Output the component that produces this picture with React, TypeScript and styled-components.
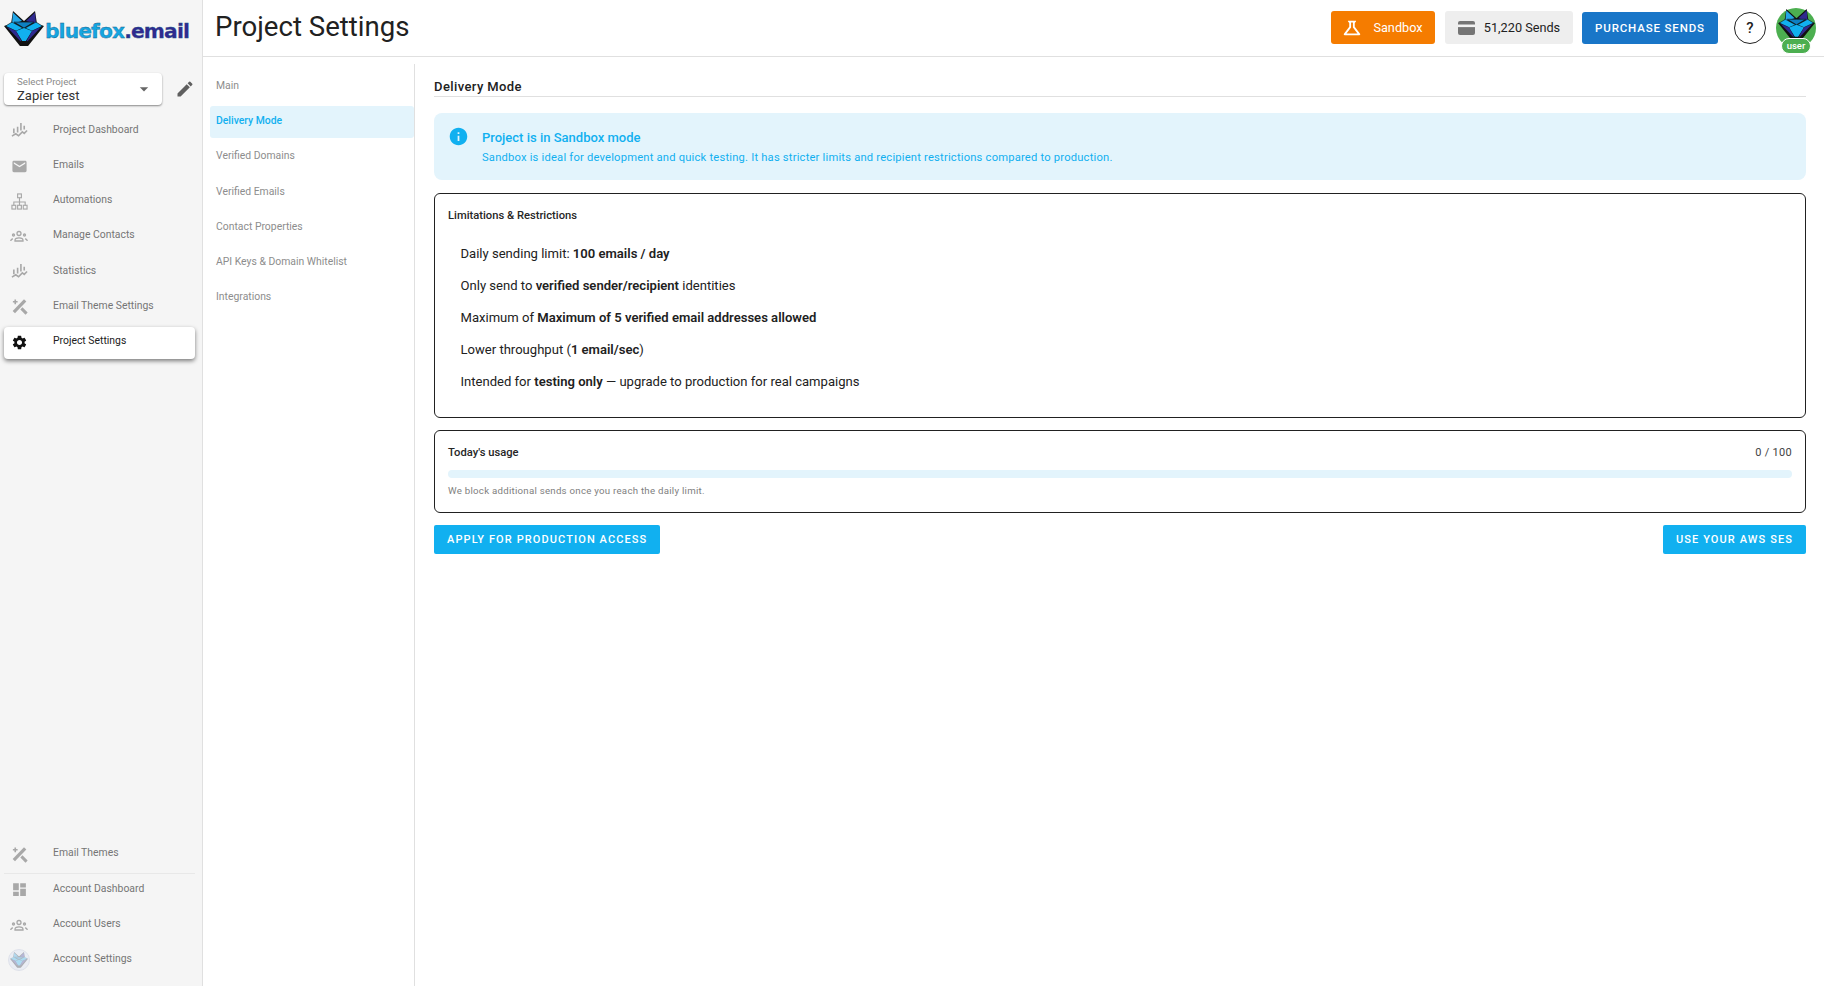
import React from "react";
import styled, { createGlobalStyle } from "styled-components";
import {
  MdArrowDropDown,
  MdDashboard,
  MdEdit,
  MdEmail,
  MdInfo,
  MdOutlineScience,
  MdSettings,
} from "react-icons/md";

const GlobalStyle = createGlobalStyle`
  html, body, #root {
    margin: 0;
    height: 100%;
  }
  body {
    font-family: Roboto, "Liberation Sans", sans-serif;
    color: #212121;
    background: #fff;
    overflow: hidden;
  }
  * {
    box-sizing: border-box;
  }
`;

const Shell = styled.div`
  display: grid;
  grid-template-columns: 203px 1fr;
  height: 986px;
`;

const Sidebar = styled.aside`
  display: flex;
  flex-direction: column;
  background: #f5f5f5;
  border-right: 1px solid #e0e0e0;
  padding: 0 7px 0 4px;
`;

const Logo = styled.div`
  display: flex;
  align-items: center;
  height: 57px;
  gap: 1px;
`;

const LogoText = styled.span`
  font-family: "DejaVu Sans", sans-serif;
  font-weight: 700;
  font-size: 20.3px;
  letter-spacing: -0.9px;
  color: #15a5e0;
  -webkit-text-stroke: 0.3px #1c5a85;
  margin-top: 4px;
  white-space: nowrap;

  b {
    color: #2f2a8f;
  }
`;

const ProjectRow = styled.div`
  display: flex;
  align-items: center;
  margin-top: 16px;
  margin-bottom: 10.4px;
`;

const SelectBox = styled.div`
  position: relative;
  width: 159px;
  height: 32px;
  background: #fff;
  border-radius: 4px;
  box-shadow: 0 1px 2px rgba(0, 0, 0, 0.45);
  padding: 4px 0 0 13px;
`;

const SelectLabel = styled.div`
  font-size: 9.7px;
  line-height: 10px;
  color: #8a8a8a;
`;

const SelectValue = styled.div`
  font-size: 13px;
  line-height: 17px;
  letter-spacing: 0.05px;
  color: #333;
`;

const SelectCaret = styled.span`
  position: absolute;
  right: 8px;
  top: 6px;
  color: #666;
  font-size: 20px;
  line-height: 0;

  svg {
    display: block;
  }
`;

const PencilSlot = styled.span`
  display: flex;
  margin-left: 13px;
  color: #5f5f5f;
  font-size: 20px;
`;

const NavRow = styled.div<{ $active?: boolean }>`
  display: flex;
  align-items: center;
  height: 32px;
  margin-bottom: 3.2px;
  border-radius: 4px;
  font-size: 10.4px;
  color: ${(p) => (p.$active ? "#212121" : "#757575")};
  background: ${(p) => (p.$active ? "#fff" : "transparent")};
  box-shadow: ${(p) => (p.$active ? "0 2px 4px rgba(0,0,0,.5)" : "none")};
  padding-bottom: 4px;
`;

const NavIcon = styled.span<{ $active?: boolean }>`
  display: flex;
  align-items: center;
  justify-content: center;
  width: 30px;
  margin-right: 19px;
  margin-top: 3px;
  font-size: 17px;
  color: ${(p) => (p.$active ? "#111" : "#a8a8a8")};
`;

const BottomGroup = styled.div`
  margin-top: auto;
  padding-bottom: 6.4px;
`;

const Divider = styled.div`
  height: 1px;
  background: #e8e8e8;
  margin: -1px 0 0;
`;

const RightPane = styled.div`
  display: flex;
  flex-direction: column;
  min-width: 0;
`;

const Header = styled.header`
  display: flex;
  align-items: center;
  height: 57px;
  padding: 0 8px 1px 12px;
  border-bottom: 1px solid #e0e0e0;
`;

const PageTitle = styled.h1`
  margin: 0 auto 2px 0;
  font-size: 27.6px;
  font-weight: 400;
  color: #212121;
`;

const HeaderChip = styled.div<{ $bg: string; $fg: string }>`
  display: flex;
  align-items: center;
  justify-content: center;
  height: 33px;
  margin-right: 10px;
  border-radius: 3px;
  font-size: 12.7px;
  background: ${(p) => p.$bg};
  color: ${(p) => p.$fg};
`;

const SandboxChip = styled(HeaderChip)`
  width: 104px;
  gap: 10px;
  padding-right: 2px;

  svg {
    font-size: 22px;
  }
`;

const SendsChip = styled(HeaderChip)`
  width: 128px;
  gap: 9px;
  margin-right: 9px;
`;

const PurchaseChip = styled(HeaderChip)`
  width: 136px;
  height: 32px;
  font-size: 11.5px;
  font-weight: 500;
  letter-spacing: 0.85px;
  margin-right: 16px;
`;

const HelpCircle = styled.div`
  display: flex;
  align-items: center;
  justify-content: center;
  width: 32px;
  height: 32px;
  border: 1px solid #212121;
  border-radius: 50%;
  font-size: 15px;
  font-weight: 500;
  margin-right: 10px;
`;

const Avatar = styled.div`
  position: relative;
  display: flex;
  align-items: center;
  justify-content: center;
  width: 40px;
  height: 40px;
  border-radius: 50%;
  background: #4caf50;
  padding-bottom: 5px;
`;

const AvatarBadge = styled.span`
  position: absolute;
  left: 5px;
  top: 30px;
  width: 30px;
  height: 16px;
  border-radius: 8px;
  border: 1px solid #fff;
  background: #4caf50;
  color: #fff;
  font-size: 9.5px;
  font-weight: 500;
  line-height: 14px;
  text-align: center;
`;

const Body = styled.div`
  display: flex;
  flex: 1;
  min-height: 0;
`;

const SubNav = styled.nav`
  width: 212px;
  margin-top: 7px;
  padding: 7px 0 0 7px;
  border-right: 1px solid #e0e0e0;
`;

const SubNavItem = styled.div<{ $active?: boolean }>`
  display: flex;
  align-items: center;
  height: 32px;
  margin-bottom: 3.2px;
  padding: 0 6px 3px;
  border-radius: 3px;
  font-size: 10.4px;
  color: ${(p) => (p.$active ? "#11b0f0" : "#8d8d8d")};
  font-weight: ${(p) => (p.$active ? 500 : 400)};
  background: ${(p) => (p.$active ? "#e3f4fc" : "transparent")};
`;

const Content = styled.main`
  flex: 1;
  min-width: 0;
  padding: 20px 18px 0 19px;
`;

const SectionTitle = styled.div`
  height: 20px;
  font-size: 13px;
  font-weight: 500;
  letter-spacing: 0.4px;
  line-height: 20px;
  border-bottom: 1px solid #e0e0e0;
  margin-bottom: 16px;
`;

const Alert = styled.div`
  display: flex;
  height: 67px;
  padding: 15px 0 0 14px;
  background: #e3f4fc;
  border-radius: 8px;
  color: #11b0f0;
  margin-bottom: 13px;
`;

const AlertIcon = styled.span`
  display: flex;
  font-size: 21px;
  height: 21px;
  margin: -2px 13px 0 0;
`;

const AlertTitle = styled.div`
  font-size: 13px;
  font-weight: 500;
  line-height: 20px;
`;

const AlertText = styled.div`
  font-size: 11.2px;
  line-height: 20px;
  letter-spacing: 0.2px;
`;

const Card = styled.section<{ $height: number }>`
  height: ${(p) => p.$height}px;
  border: 1px solid #212121;
  border-radius: 6px;
  padding: 13px 13px 0;
  margin-bottom: 12px;
`;

const CardTitle = styled.div`
  font-size: 11.2px;
  font-weight: 500;
  line-height: 18px;
  color: #262626;
`;

const LimitList = styled.div`
  margin-top: 13px;
  padding-left: 12.5px;
`;

const LimitRow = styled.div`
  font-size: 13.07px;
  height: 32px;
  line-height: 32px;
  color: #212121;

  b {
    font-weight: 600;
  }
`;

const UsageTop = styled.div`
  display: flex;
  justify-content: space-between;
  margin-bottom: 8px;
`;

const UsageCount = styled.span`
  font-size: 11px;
  line-height: 18px;
  color: #424242;
  letter-spacing: 0.3px;
`;

const Track = styled.div`
  height: 8px;
  border-radius: 4px;
  background: #e3f4fc;
`;

const Hint = styled.div`
  margin-top: 6px;
  font-size: 9.7px;
  line-height: 14px;
  letter-spacing: 0.25px;
  color: #808080;
`;

const ActionRow = styled.div`
  display: flex;
  justify-content: space-between;
`;

const ActionButton = styled.button`
  height: 29px;
  padding: 0 13px;
  border: 0;
  border-radius: 2px;
  background: #11b0f0;
  color: #fff;
  font-family: Roboto, sans-serif;
  font-size: 11px;
  font-weight: 500;
  letter-spacing: 1.1px;
`;

const FoxIcon = ({ size, faded }: { size: number; faded?: boolean }) => (
  <svg width={size} height={size * 0.88} viewBox="0 0 40 35" opacity={faded ? 0.28 : 1}>
    <polygon points="9,0 20,10 31,0 33,13 40,15 24,35 20,35 16,35 0,15 7,13" fill="#111" />
    <polygon points="9,1.5 18,10 8,13" fill="#22a6e6" />
    <polygon points="31,1.5 22,10 32,13" fill="#2f2a8f" />
    <polygon points="1.5,15 8,11 19,17 12,20" fill="#11b0f0" stroke="#111" strokeWidth="0.6" />
    <polygon points="38.5,15 32,11 21,17 28,20" fill="#11b0f0" stroke="#111" strokeWidth="0.6" />
    <polygon points="10,11 20,11 30,11 20,17" fill="#0d7fc1" stroke="#111" strokeWidth="0.6" />
    <polygon points="12,20 20,17 28,20 20,33" fill="#11b0f0" />
    <polygon points="3,16 12,20 19,33" fill="#2f2a8f" />
    <polygon points="37,16 28,20 21,33" fill="#2f2a8f" />
    <polygon points="16,30 24,30 20,35" fill="#111" />
  </svg>
);

const ChartIcon = () => (
  <svg width="17" height="17" viewBox="0 0 18 18" fill="none" stroke="currentColor" strokeWidth="1.7">
    <path d="M3 7v5M7 5v6M10.5 1v8M14 4v4" />
    <path d="M1 15l4-2.5 3 2 4-4 2 1.5 3-3" />
  </svg>
);

const TreeIcon = () => (
  <svg width="17" height="17" viewBox="0 0 18 18" fill="none" stroke="currentColor" strokeWidth="1.2">
    <rect x="7" y="1" width="4" height="4" />
    <rect x="1" y="13" width="4" height="4" />
    <rect x="7" y="13" width="4" height="4" />
    <rect x="13" y="13" width="4" height="4" />
    <path d="M9 5v8M3 13v-3.5h12V13" />
  </svg>
);

const GroupIcon = () => (
  <svg width="18" height="18" viewBox="0 0 18 18" fill="none" stroke="currentColor" strokeWidth="1.3">
    <circle cx="9" cy="6.5" r="2" />
    <circle cx="3.5" cy="8" r="1" />
    <circle cx="14.5" cy="8" r="1" />
    <path d="M5 14v-.8c0-1.6 2-2.4 4-2.4s4 .8 4 2.4v.8z" />
    <path d="M.8 14c0-1.3.8-2 2.2-2.2M17.2 14c0-1.3-.8-2-2.2-2.2" />
  </svg>
);

const ThemeIcon = () => (
  <svg width="17" height="17" viewBox="0 0 18 18" fill="none" stroke="currentColor">
    <path d="M15 2.5L3 15" strokeWidth="3.4" />
    <path d="M4.5 1.5v5M2 4h5" strokeWidth="1.7" />
    <path d="M11 11l5.5 5.5" strokeWidth="3.2" />
  </svg>
);

const CardIcon = () => (
  <svg width="17" height="14" viewBox="0 0 17 14">
    <rect width="17" height="14" rx="2" fill="#757575" />
    <rect y="3.5" width="17" height="2.6" fill="#f2f2f2" />
  </svg>
);

const SettingsAvatar = styled.span`
  display: flex;
  align-items: center;
  justify-content: center;
  width: 22px;
  height: 22px;
  border-radius: 50%;
  background: #eaedf4;
  border: 1px solid #dfe2ea;
`;

const topItems = [
  { label: "Project Dashboard", icon: <ChartIcon /> },
  { label: "Emails", icon: <MdEmail /> },
  { label: "Automations", icon: <TreeIcon /> },
  { label: "Manage Contacts", icon: <GroupIcon /> },
  { label: "Statistics", icon: <ChartIcon /> },
  { label: "Email Theme Settings", icon: <ThemeIcon /> },
  { label: "Project Settings", icon: <MdSettings />, active: true },
];

const subNavItems = [
  "Main",
  "Delivery Mode",
  "Verified Domains",
  "Verified Emails",
  "Contact Properties",
  "API Keys & Domain Whitelist",
  "Integrations",
];

export default function App() {
  return (
    <>
      <GlobalStyle />
      <Shell>
        <Sidebar>
          <Logo>
            <FoxIcon size={40} />
            <LogoText>
              bluefox<b>.email</b>
            </LogoText>
          </Logo>
          <ProjectRow>
            <SelectBox>
              <SelectLabel>Select Project</SelectLabel>
              <SelectValue>Zapier test</SelectValue>
              <SelectCaret>
                <MdArrowDropDown />
              </SelectCaret>
            </SelectBox>
            <PencilSlot>
              <MdEdit />
            </PencilSlot>
          </ProjectRow>
          {topItems.map((item) => (
            <NavRow key={item.label} $active={item.active}>
              <NavIcon $active={item.active}>{item.icon}</NavIcon>
              {item.label}
            </NavRow>
          ))}
          <BottomGroup>
            <NavRow>
              <NavIcon>
                <ThemeIcon />
              </NavIcon>
              Email Themes
            </NavRow>
            <Divider />
            <NavRow>
              <NavIcon>
                <MdDashboard />
              </NavIcon>
              Account Dashboard
            </NavRow>
            <NavRow>
              <NavIcon>
                <GroupIcon />
              </NavIcon>
              Account Users
            </NavRow>
            <NavRow>
              <NavIcon>
                <SettingsAvatar>
                  <FoxIcon size={18} faded />
                </SettingsAvatar>
              </NavIcon>
              Account Settings
            </NavRow>
          </BottomGroup>
        </Sidebar>
        <RightPane>
          <Header>
            <PageTitle>Project Settings</PageTitle>
            <SandboxChip $bg="#f57c00" $fg="#fff">
              <MdOutlineScience />
              Sandbox
            </SandboxChip>
            <SendsChip $bg="#eeeeee" $fg="#212121">
              <CardIcon />
              51,220 Sends
            </SendsChip>
            <PurchaseChip $bg="#1976c8" $fg="#fff">
              PURCHASE SENDS
            </PurchaseChip>
            <HelpCircle>?</HelpCircle>
            <Avatar>
              <FoxIcon size={37} />
              <AvatarBadge>user</AvatarBadge>
            </Avatar>
          </Header>
          <Body>
            <SubNav>
              {subNavItems.map((label) => (
                <SubNavItem key={label} $active={label === "Delivery Mode"}>
                  {label}
                </SubNavItem>
              ))}
            </SubNav>
            <Content>
              <SectionTitle>Delivery Mode</SectionTitle>
              <Alert>
                <AlertIcon>
                  <MdInfo />
                </AlertIcon>
                <div>
                  <AlertTitle>Project is in Sandbox mode</AlertTitle>
                  <AlertText>
                    Sandbox is ideal for development and quick testing. It has stricter limits and recipient
                    restrictions compared to production.
                  </AlertText>
                </div>
              </Alert>
              <Card $height={225}>
                <CardTitle>Limitations &amp; Restrictions</CardTitle>
                <LimitList>
                  <LimitRow>
                    Daily sending limit: <b>100 emails / day</b>
                  </LimitRow>
                  <LimitRow>
                    Only send to <b>verified sender/recipient</b> identities
                  </LimitRow>
                  <LimitRow>
                    Maximum of <b>Maximum of 5 verified email addresses allowed</b>
                  </LimitRow>
                  <LimitRow>
                    Lower throughput (<b>1 email/sec</b>)
                  </LimitRow>
                  <LimitRow>
                    Intended for <b>testing only</b> — upgrade to production for real campaigns
                  </LimitRow>
                </LimitList>
              </Card>
              <Card $height={83}>
                <UsageTop>
                  <CardTitle>Today's usage</CardTitle>
                  <UsageCount>0 / 100</UsageCount>
                </UsageTop>
                <Track />
                <Hint>We block additional sends once you reach the daily limit.</Hint>
              </Card>
              <ActionRow>
                <ActionButton>APPLY FOR PRODUCTION ACCESS</ActionButton>
                <ActionButton>USE YOUR AWS SES</ActionButton>
              </ActionRow>
            </Content>
          </Body>
        </RightPane>
      </Shell>
    </>
  );
}
